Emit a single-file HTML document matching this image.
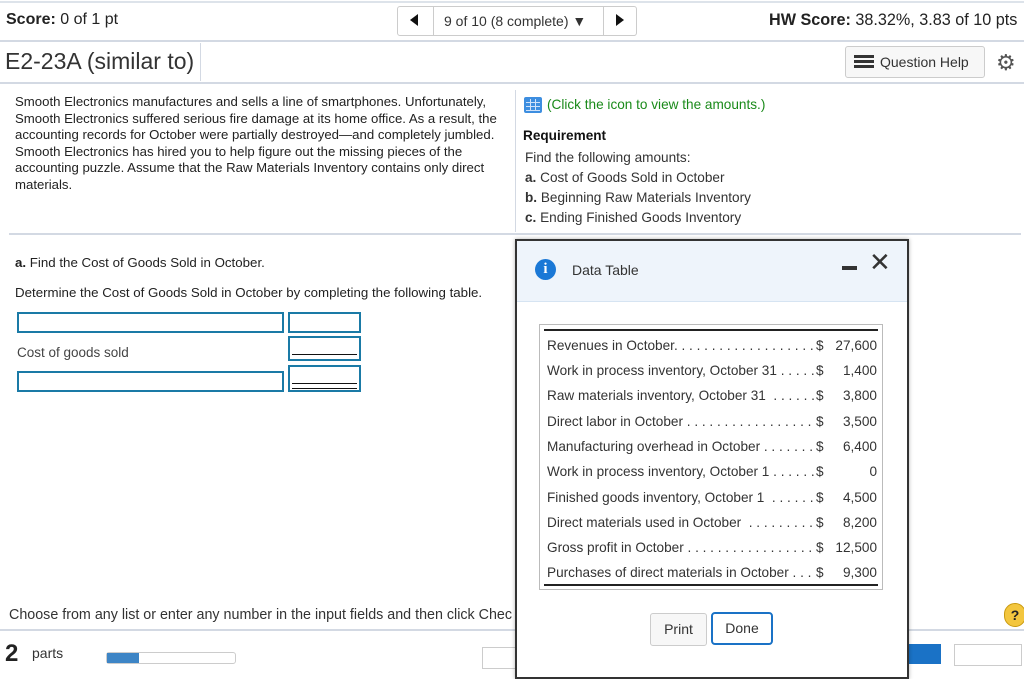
<!DOCTYPE html>
<html><head><style>
body{margin:0;width:1024px;height:658px;overflow:hidden;background:#fff;font-family:"Liberation Sans",sans-serif;color:#222;position:relative}
.a{position:absolute;white-space:nowrap}
.hl{position:absolute;height:2px;background:#d3d9e3}
.inp{position:absolute;border:2px solid #1a7aa6;background:#fff;box-sizing:border-box}
.row{position:absolute;left:547px;width:330px;font-size:13.6px;color:#333;height:25px}
.row .l{position:absolute;left:0}
.row .d{position:absolute;left:269px}
.row .v{position:absolute;right:0}
</style></head><body>
<div class="hl" style="top:1px;left:0;width:1024px;background:#dde3ea"></div>
<div class="a" style="left:6px;top:11px;font-size:16px"><b>Score:</b> 0 of 1 pt</div>
<div class="a" style="left:397px;top:6px;width:240px;height:30px;border:1px solid #ccc;border-radius:3px;box-sizing:border-box"></div>
<div class="a" style="left:433px;top:6px;width:1px;height:30px;background:#ccc"></div>
<div class="a" style="left:603px;top:6px;width:1px;height:30px;background:#ccc"></div>
<div class="a" style="left:410px;top:14px;width:0;height:0;border-top:6px solid transparent;border-bottom:6px solid transparent;border-right:8px solid #111"></div>
<div class="a" style="left:616px;top:14px;width:0;height:0;border-top:6px solid transparent;border-bottom:6px solid transparent;border-left:8px solid #111"></div>
<div class="a" style="left:444px;top:13px;font-size:14px;color:#333">9 of 10 (8 complete) ▼</div>
<div class="a" style="left:769px;top:11px;font-size:16.2px"><b>HW Score:</b> 38.32%, 3.83 of 10 pts</div>
<div class="hl" style="top:40px;left:0;width:1024px"></div>
<div class="a" style="left:5px;top:48px;font-size:23px;color:#333">E2-23A (similar to)</div>
<div class="a" style="left:200px;top:43px;width:1px;height:38px;background:#d3d9e3"></div>
<div class="a" style="left:845px;top:46px;width:140px;height:32px;border:1px solid #ccc;border-radius:3px;background:#f7f7f7;box-sizing:border-box"></div>
<div class="a" style="left:854px;top:55px;width:20px;height:14px;background:repeating-linear-gradient(#333 0 3px,transparent 3px 5px)"></div>
<div class="a" style="left:880px;top:54px;font-size:14px;color:#333">Question Help</div>
<div class="a" style="left:996px;top:50px;font-size:22px;color:#555">⚙</div>
<div class="hl" style="top:82px;left:0;width:1024px"></div>
<div class="a" style="left:15px;top:94px;font-size:13.2px;line-height:16.6px;color:#222">Smooth Electronics manufactures and sells a line of smartphones. Unfortunately,<br>Smooth Electronics suffered serious fire damage at its home office. As a result, the<br>accounting records for October were partially destroyed—and completely jumbled.<br>Smooth Electronics has hired you to help figure out the missing pieces of the<br>accounting puzzle. Assume that the Raw Materials Inventory contains only direct<br>materials.</div>
<div class="a" style="left:515px;top:90px;width:1px;height:142px;background:#d3d9e3"></div>
<div class="a" style="left:524px;top:97px;width:18px;height:16px;background:#3d8ee0;border-radius:2px"><div style="position:absolute;left:2px;top:2px;width:14px;height:12px;background:repeating-linear-gradient(90deg,transparent 0 4px,#cfe2fa 4px 5px),repeating-linear-gradient(transparent 0 3px,#cfe2fa 3px 4px)"></div></div>
<div class="a" style="left:547px;top:97px;font-size:13.6px;color:#1a8a1a">(Click the icon to view the amounts.)</div>
<div class="a" style="left:523px;top:128px;font-size:13.6px;font-weight:bold;color:#111">Requirement</div>
<div class="a" style="left:525px;top:148px;font-size:13.6px;line-height:20px;color:#333">Find the following amounts:<br><b>a.</b> Cost of Goods Sold in October<br><b>b.</b> Beginning Raw Materials Inventory<br><b>c.</b> Ending Finished Goods Inventory</div>
<div class="hl" style="top:233px;left:9px;width:1012px"></div>
<div class="a" style="left:15px;top:255px;font-size:13.3px"><b>a.</b> Find the Cost of Goods Sold in October.</div>
<div class="a" style="left:15px;top:285px;font-size:13.3px">Determine the Cost of Goods Sold in October by completing the following table.</div>
<div class="inp" style="left:17px;top:312px;width:267px;height:21px"></div>
<div class="inp" style="left:288px;top:312px;width:73px;height:21px"></div>
<div class="a" style="left:17px;top:345px;font-size:13.5px;color:#444">Cost of goods sold</div>
<div class="inp" style="left:288px;top:336px;width:73px;height:25px"><div style="position:absolute;left:2px;right:2px;top:16px;height:1px;background:#111"></div></div>
<div class="inp" style="left:17px;top:371px;width:267px;height:21px"></div>
<div class="inp" style="left:288px;top:365px;width:73px;height:27px"><div style="position:absolute;left:2px;right:2px;top:16px;height:4px;border-top:1px solid #111;border-bottom:1px solid #111"></div></div>
<div class="a" style="left:9px;top:607px;font-size:14.3px;color:#333">Choose from any list or enter any number in the input fields and then click Chec</div>
<div class="hl" style="top:629px;left:0;width:1024px"></div>
<div class="a" style="left:5px;top:640px;font-size:24px;font-weight:bold;color:#222">2</div>
<div class="a" style="left:32px;top:645px;font-size:14px;color:#333">parts</div>
<div class="a" style="left:106px;top:652px;width:128px;height:10px;border:1px solid #ccc;border-radius:3px"><div style="width:32px;height:10px;background:#3d85c6"></div></div>
<div class="a" style="left:482px;top:647px;width:40px;height:20px;border:1px solid #ccc"></div>
<div class="a" style="left:1004px;top:603px;width:20px;height:22px;border-radius:11px;background:#f3c63e;border:1px solid #c99a10;font-size:14px;font-weight:bold;text-align:center;line-height:22px">?</div>
<div class="a" style="left:908px;top:644px;width:33px;height:20px;background:#1a72c6"></div>
<div class="a" style="left:954px;top:644px;width:66px;height:20px;border:1px solid #ccc"></div>
<!-- modal -->
<div class="a" style="left:515px;top:239px;width:394px;height:440px;border:2px solid #333;box-sizing:border-box;background:#fff;box-shadow:0 0 4px rgba(0,0,0,.3)">
<div style="position:absolute;left:0;top:0;right:0;height:60px;background:#eef4fb;border-bottom:1px solid #d6e4f2"></div>
<div style="position:absolute;left:18px;top:18px;width:21px;height:21px;border-radius:11px;background:#1a78d6;color:#fff;font:bold 15px 'Liberation Serif',serif;text-align:center;line-height:21px">i</div>
<div style="position:absolute;left:55px;top:21px;font-size:14px;color:#333">Data Table</div>
<div style="position:absolute;left:325px;top:25px;width:15px;height:4px;background:#333"></div>
<div style="position:absolute;left:352px;top:6px;font-size:26px;color:#333">✕</div>
<div style="position:absolute;left:22px;top:83px;width:344px;height:266px;border:1px solid #bbb;box-sizing:border-box"></div>
<div style="position:absolute;left:27px;top:88px;width:334px;height:2px;background:#222"></div>
<div style="position:absolute;left:27px;top:343px;width:334px;height:2px;background:#222"></div>
<div style="position:absolute;left:133px;top:372px;width:55px;height:31px;border:1px solid #ccc;border-radius:3px;background:#f7f7f7;font-size:14px;text-align:center;line-height:31px;color:#333">Print</div>
<div style="position:absolute;left:194px;top:371px;width:62px;height:33px;border:2px solid #1a72c6;border-radius:4px;font-size:14px;text-align:center;line-height:29px;color:#333;box-sizing:border-box">Done</div>
</div>
<div class="row" style="top:338px"><span class="l">Revenues in October. . . . . . . . . . . . . . . . . . .</span><span class="d">$</span><span class="v">27,600</span></div>
<div class="row" style="top:363px"><span class="l">Work in process inventory, October 31 . . . . .</span><span class="d">$</span><span class="v">1,400</span></div>
<div class="row" style="top:388px"><span class="l">Raw materials inventory, October 31 &nbsp;. . . . . .</span><span class="d">$</span><span class="v">3,800</span></div>
<div class="row" style="top:414px"><span class="l">Direct labor in October . . . . . . . . . . . . . . . . .</span><span class="d">$</span><span class="v">3,500</span></div>
<div class="row" style="top:439px"><span class="l">Manufacturing overhead in October . . . . . . .</span><span class="d">$</span><span class="v">6,400</span></div>
<div class="row" style="top:464px"><span class="l">Work in process inventory, October 1 . . . . . .</span><span class="d">$</span><span class="v">0</span></div>
<div class="row" style="top:490px"><span class="l">Finished goods inventory, October 1 &nbsp;. . . . . .</span><span class="d">$</span><span class="v">4,500</span></div>
<div class="row" style="top:515px"><span class="l">Direct materials used in October &nbsp;. . . . . . . . .</span><span class="d">$</span><span class="v">8,200</span></div>
<div class="row" style="top:540px"><span class="l">Gross profit in October . . . . . . . . . . . . . . . . .</span><span class="d">$</span><span class="v">12,500</span></div>
<div class="row" style="top:565px"><span class="l">Purchases of direct materials in October . . .</span><span class="d">$</span><span class="v">9,300</span></div>
</body></html>
